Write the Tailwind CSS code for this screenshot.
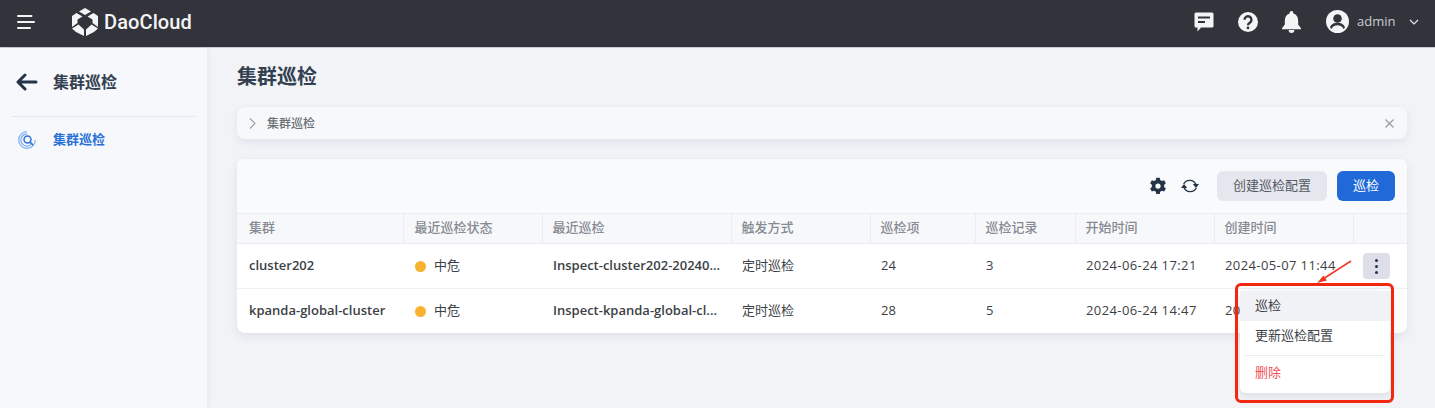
<!DOCTYPE html>
<html lang="zh-CN">
<head>
    <meta charset="UTF-8">
    <title>集群巡检</title>
    <script src="https://cdn.jsdelivr.net/npm/@tailwindcss/browser@4"></script>
</head>
<body class="w-[1435px] h-[408px] overflow-hidden bg-[#f1f3f7] text-[#3c3f46] font-['Open_Sans','Noto_Sans_CJK_SC',sans-serif]">

    <!-- top bar -->
    <header class="h-[48px] pb-[4px] bg-[#33343b] border-b border-[#c9ccd3] flex items-center text-white">
        <svg class="ml-[17px] w-[18px] h-[14px]" viewBox="0 0 18 14" fill="none" stroke="#f3f4f6" stroke-width="2" stroke-linecap="round">
            <path d="M1 1h13.500M1 7h16M1 13h12"/>
        </svg>
        <svg class="ml-[36px] w-[28px] h-[28px]" viewBox="0 0 28 28" fill="#f3f4f6">
            <path d="M14 0l6 3.500-6 3.500-6-3.500z"/>
            <path d="M5.500 5l6 3.500-5 3v3.500L1 19V8z"/>
            <path d="M22.500 5l-6 3.500 5 3v3.500L27 19V8z"/>
            <path d="M1 20.500l6.500-4 5.500 5V28l-8-4z"/>
            <path d="M27 20.500l-6.500-4-5.500 5V28l8-4z"/>
        </svg>
        <span class="ml-[5px] text-[20px] font-medium tracking-[0.1px] font-['Roboto',sans-serif] text-[#f3f4f6]">DaoCloud</span>
        <div class="ml-auto flex items-center">
            <svg class="w-[20px] h-[20px]" viewBox="0 0 20 20">
                <path fill="#f3f4f6" d="M2 .500h16a1.500 1.500 0 0 1 1.500 1.500v12a1.500 1.500 0 0 1-1.500 1.500H7l-3.500 4v-4H2A1.500 1.500 0 0 1 .500 14V2A1.500 1.500 0 0 1 2 .500z"/>
                <path stroke="#33343b" stroke-width="1.800" d="M4 5.500h12M4 10h7"/>
            </svg>
            <svg class="ml-[24px] w-[20px] h-[20px]" viewBox="0 0 22 22">
                <circle cx="11" cy="11" r="11" fill="#f3f4f6"/>
                <path fill="none" stroke="#33343b" stroke-width="2.600" d="M7.200 8.500a3.800 3.800 0 1 1 6 3.100c-1.500 1-2.200 1.600-2.200 3"/>
                <circle cx="11" cy="17.500" r="1.500" fill="#33343b"/>
            </svg>
            <svg class="ml-[24px] w-[19px] h-[22px]" viewBox="0 0 20 23" fill="#f3f4f6">
                <path d="M10 0a2 2 0 0 1 2 2v.500c3.500 1 5 4 5 7.500v4l3 4v1H0v-1l3-4v-4c0-3.500 1.500-6.500 5-7.500V2a2 2 0 0 1 2-2z"/>
                <path d="M7 20h6a3 3 0 0 1-6 0z"/>
            </svg>
            <svg class="ml-[25px] w-[23px] h-[23px]" viewBox="0 0 23 23">
                <circle cx="11.500" cy="11.500" r="11.500" fill="#f3f4f6"/>
                <circle cx="11.500" cy="8.500" r="4.300" fill="#33343b"/>
                <path fill="#33343b" d="M4 17.500c1-3.500 4.300-4.800 7.500-4.800s6.500 1.300 7.500 4.800l-1.500 1.500c-1-2.500-3.500-3.700-6-3.700s-5 1.200-6 3.700z"/>
            </svg>
            <span class="ml-[8px] w-[37px] text-[13px] text-[#c9ccd3]">admin</span>
            <svg class="ml-[15px] mr-[16px] w-[10px] h-[6px]" viewBox="0 0 10 6" fill="none" stroke="#e5e7eb" stroke-width="1.200">
                <path d="M1 1l4 4 4-4"/>
            </svg>
        </div>
    </header>

    <div class="flex h-[360px]">
        <!-- sidebar -->
        <aside class="w-[207px] shrink-0 bg-[#f7f8fc] shadow-[1px_0_6px_rgba(0,0,0,0.06)] px-[12px]">
            <div class="h-[69px] flex items-center border-b border-[#e3e6ed]">
                <svg class="ml-[4px] w-[22px] h-[18px]" viewBox="0 0 22 18" fill="none" stroke="#233448" stroke-width="3" stroke-linecap="round" stroke-linejoin="round">
                    <path d="M9 2L2 9l7 7M2 9h18"/>
                </svg>
                <span class="ml-[15px] text-[16px] font-semibold text-[#33404f]">集群巡检</span>
            </div>
            <div class="mt-[12px] h-[22px] flex items-center text-[#2a72d6]">
                <svg class="ml-[6px] w-[18px] h-[18px]" viewBox="0 0 18 18" fill="none" stroke="#3f86e6">
                    <path stroke-width="1.200" stroke-opacity="0.65" d="M9 .700a8.300 8.300 0 1 0 8.300 8.300"/>
                    <path stroke-width="1.200" stroke-opacity="0.65" d="M9 2.900a6.100 6.100 0 1 0 5 9.600"/>
                    <circle cx="9.500" cy="8.500" r="3.500" stroke="#2a72d6" stroke-width="1.500"/>
                    <path stroke="#2a72d6" stroke-width="1.600" stroke-linecap="round" d="M12.200 11.200l2.500 2.500"/>
                </svg>
                <span class="ml-[17px] text-[13px] font-semibold">集群巡检</span>
            </div>
        </aside>

        <!-- content -->
        <main class="w-[1170px] ml-[30px]">
            <h1 class="h-[59px] pt-[14px] text-[20px] leading-[30px] font-semibold text-[#33404f]">集群巡检</h1>

            <div class="h-[32px] bg-[#f7f8fa] rounded-[8px] shadow-[0_3px_8px_rgba(30,40,60,0.08)] flex items-center pl-[12px] pr-[13px]">
                <svg class="w-[7px] h-[11px]" viewBox="0 0 7 11" fill="none" stroke="#9a9ea6" stroke-width="1.100"><path d="M1 .500l5 5-5 5"/></svg>
                <span class="ml-[11px] text-[12px] leading-[18px] pt-[1px] font-medium text-[#6b6e75]">集群巡检</span>
                <svg class="ml-auto w-[9px] h-[9px]" viewBox="0 0 9 9" stroke="#9a9ea6" stroke-width="1.300"><path d="M.500.500l8 8M8.500.500l-8 8"/></svg>
            </div>

            <section class="mt-[20px] h-[174px] bg-white rounded-[8px] shadow-[0_3px_10px_rgba(30,40,60,0.09)] overflow-hidden">
                <div class="h-[54px] bg-[#f9fafb] flex items-center justify-end pr-[12px]">
                    <svg class="w-[18px] h-[18px]" viewBox="0 0 24 24" fill="#233448">
                        <path fill-rule="evenodd" d="M14.300 1l.6 3 2.400 1.400 2.900-1 2.300 4-2.300 2v2.800l2.300 2-2.300 4-2.900-1-2.400 1.400-.6 3H9.700l-.6-3-2.400-1.400-2.900 1-2.300-4 2.300-2V10.400l-2.300-2 2.300-4 2.900 1L9.100 4l.6-3zM12 8.500a3.500 3.500 0 1 0 0 7 3.500 3.500 0 0 0 0-7z"/>
                    </svg>
                    <svg class="ml-[14px] w-[18px] h-[16px]" viewBox="0 0 18 16" fill="none" stroke="#233448" stroke-width="1.400">
                        <path d="M2.700 6A6.800 6.800 0 0 1 15 6.500"/>
                        <path d="M15.300 10A6.800 6.800 0 0 1 3 9.500"/>
                        <path fill="#233448" stroke="none" d="M11.800 6h6.200l-3 4zM0 10h6.200L3 6z"/>
                    </svg>
                    <button class="ml-[18px] w-[110px] h-[30px] rounded-[6px] bg-[#e4e7ee] text-[13px] text-[#55585f]">创建巡检配置</button>
                    <button class="ml-[10px] w-[58px] h-[30px] rounded-[6px] bg-[#2169d8] text-[13px] text-white">巡检</button>
                </div>

                <table class="w-full table-fixed text-[13px] [&_td]:pb-[1px]">
                    <colgroup>
                        <col class="w-[166px]"><col class="w-[139px]"><col class="w-[189px]"><col class="w-[139px]"><col class="w-[105px]"><col class="w-[100px]"><col class="w-[139px]"><col class="w-[139px]"><col class="w-[54px]">
                    </colgroup>
                    <thead class="text-left text-[#868a92] bg-[#f7f8fa]">
                        <tr class="h-[30px] border-y border-[#e9ecf2] [&_th]:pb-[1px]">
                            <th class="pl-[12px] font-medium">集群</th>
                            <th class="pl-[11px] font-medium border-l border-[#e9ecf2]">最近巡检状态</th>
                            <th class="pl-[10px] font-medium border-l border-[#e9ecf2]">最近巡检</th>
                            <th class="pl-[10px] font-medium border-l border-[#e9ecf2]">触发方式</th>
                            <th class="pl-[10px] font-medium border-l border-[#e9ecf2]">巡检项</th>
                            <th class="pl-[10px] font-medium border-l border-[#e9ecf2]">巡检记录</th>
                            <th class="pl-[10px] font-medium border-l border-[#e9ecf2]">开始时间</th>
                            <th class="pl-[10px] font-medium border-l border-[#e9ecf2]">创建时间</th>
                            <th class="border-l border-[#e9ecf2]"></th>
                        </tr>
                    </thead>
                    <tbody>
                        <tr class="h-[45px] border-b border-[#eef0f4]">
                            <td class="pl-[12px] font-semibold">cluster202</td>
                            <td class="pl-[12px]"><span class="flex items-center"><i class="mt-[1px] w-[11px] h-[11px] rounded-full bg-[#f7b22f]"></i><span class="ml-[8px]">中危</span></span></td>
                            <td class="pl-[11px] font-semibold truncate">Inspect-cluster202-20240...</td>
                            <td class="pl-[11px]">定时巡检</td>
                            <td class="pl-[11px]">24</td>
                            <td class="pl-[11px]">3</td>
                            <td class="pl-[11px] tracking-[0.4px] whitespace-nowrap">2024-06-24 17:21</td>
                            <td class="pl-[11px] tracking-[0.4px] whitespace-nowrap">2024-05-07 11:44</td>
                            <td>
                                <div class="ml-[10px] mt-[1px] w-[27px] h-[26px] rounded-[4px] bg-[#dcdfe9] flex flex-col items-center justify-center gap-[3px]">
                                    <i class="w-[3px] h-[3px] rounded-full bg-[#233448]"></i>
                                    <i class="w-[3px] h-[3px] rounded-full bg-[#233448]"></i>
                                    <i class="w-[3px] h-[3px] rounded-full bg-[#233448]"></i>
                                </div>
                            </td>
                        </tr>
                        <tr class="h-[45px]">
                            <td class="pl-[12px] font-semibold">kpanda-global-cluster</td>
                            <td class="pl-[12px]"><span class="flex items-center"><i class="mt-[1px] w-[11px] h-[11px] rounded-full bg-[#f7b22f]"></i><span class="ml-[8px]">中危</span></span></td>
                            <td class="pl-[11px] font-semibold truncate">Inspect-kpanda-global-cl...</td>
                            <td class="pl-[11px]">定时巡检</td>
                            <td class="pl-[11px]">28</td>
                            <td class="pl-[11px]">5</td>
                            <td class="pl-[11px] tracking-[0.4px] whitespace-nowrap">2024-06-24 14:47</td>
                            <td class="pl-[11px] tracking-[0.4px] whitespace-nowrap">2024-05-07 11:44</td>
                            <td></td>
                        </tr>
                    </tbody>
                </table>
            </section>
        </main>
    </div>

    <!-- row action menu -->
    <div class="absolute left-[1240px] top-[291px] w-[150px] h-[102px] bg-white rounded-[6px] shadow-[0_2px_10px_rgba(30,40,60,0.12)] text-[13px]">
        <div class="h-[30px] pl-[15px] flex items-center bg-[#f1f2f5]">巡检</div>
        <div class="h-[30px] pl-[15px] flex items-center">更新巡检配置</div>
        <div class="mx-[5px] mt-[4px] border-t border-[#e9ecf2]"></div>
        <div class="h-[34px] pl-[15px] flex items-center text-[#f2555a]">删除</div>
    </div>

    <!-- red annotation -->
    <div class="absolute left-[1235px] top-[283px] w-[159px] h-[120px] border-[3px] border-[#f3260f] rounded-[6px]"></div>
    <svg class="absolute left-[1315px] top-[259px] w-[38px] h-[26px]" viewBox="0 0 38 26" fill="none">
        <path d="M36 2L8 20" stroke="#ee3a26" stroke-width="1.500"/>
        <path d="M2 24l10-2.500-3.500-5z" fill="#ee3a26"/>
    </svg>
</body>
</html>
